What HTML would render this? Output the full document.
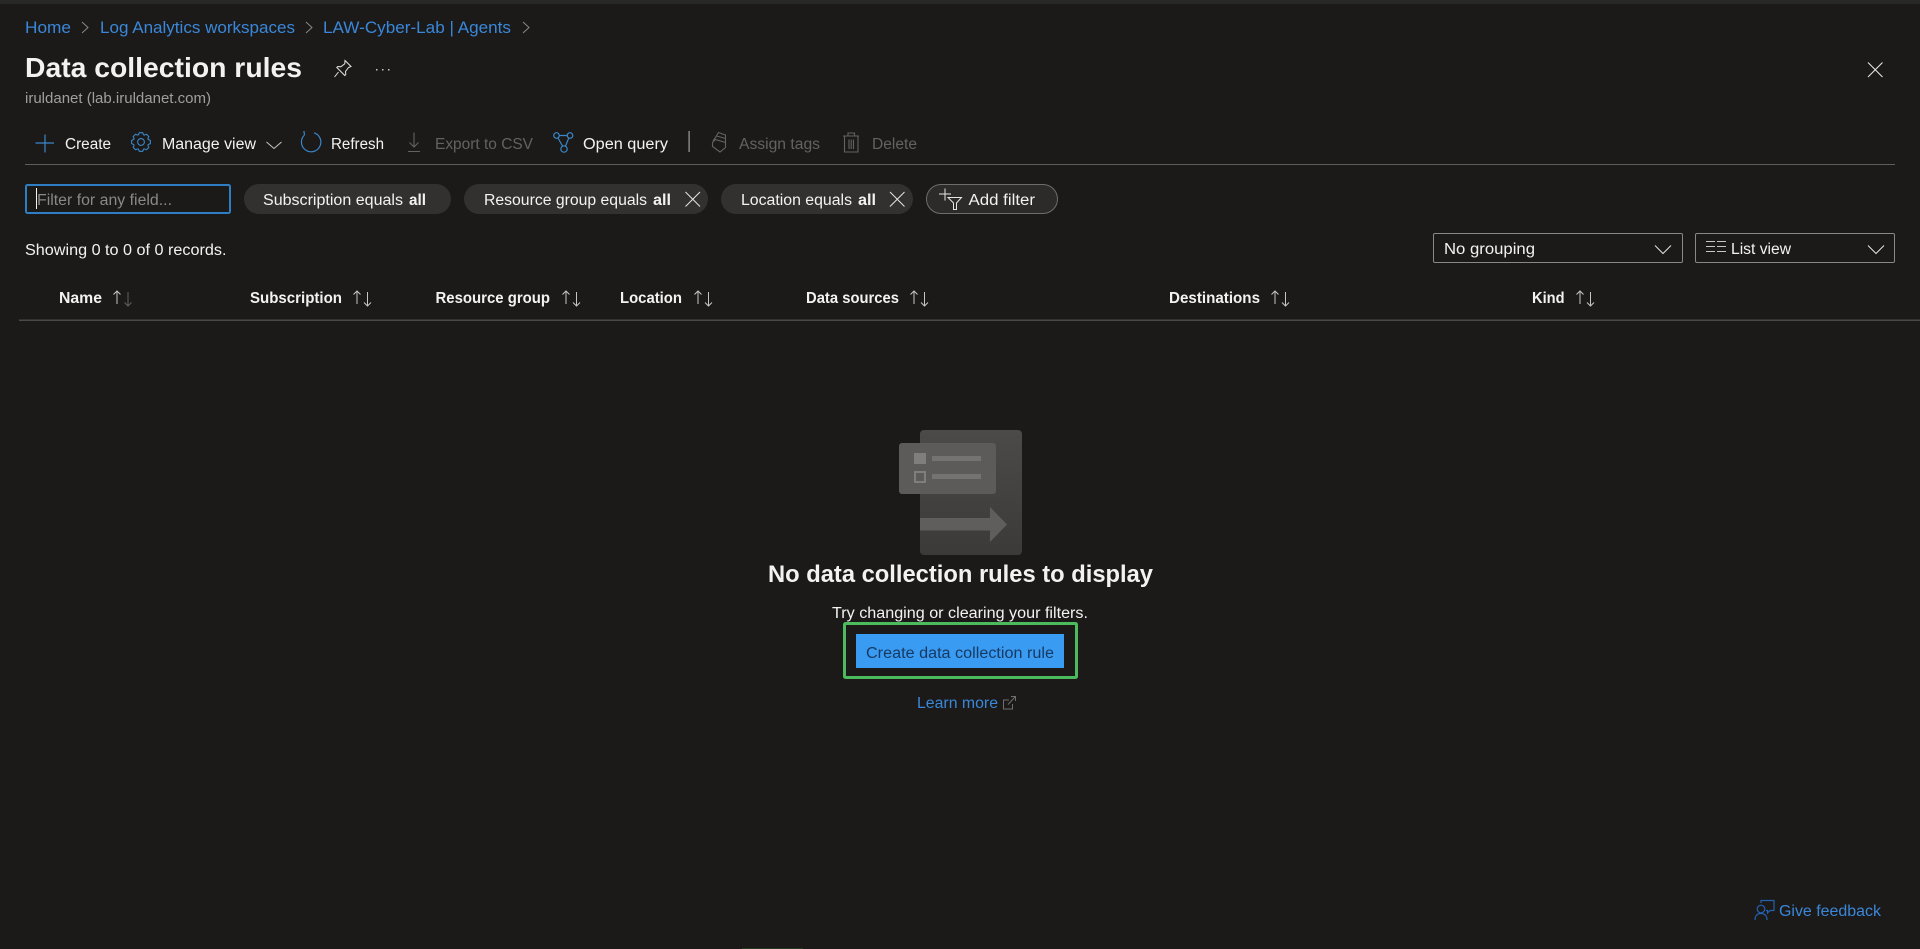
<!DOCTYPE html>
<html lang="en">
<head>
<meta charset="utf-8">
<title>Data collection rules</title>
<style>
html,body{margin:0;padding:0;background:#1b1a19;width:1920px;height:949px;overflow:hidden}
svg{display:block}
text{font-family:"Liberation Sans",Arial,sans-serif;fill:#f3f2f1;font-size:15.5px}
.l{fill:#3a87d9;font-size:17px}
.d{fill:#636261}
.b{font-weight:bold}
.i{fill:none;stroke:#e6e5e3;stroke-width:1}
.s{fill:none;stroke:#c8c6c4;stroke-width:1}
.ib{fill:none;stroke:#3a87c9;stroke-width:1.2}
.id{fill:none;stroke:#636261;stroke-width:1.1}
</style>
</head>
<body>
<svg width="1920" height="949" viewBox="0 0 1920 949" xmlns="http://www.w3.org/2000/svg">
<defs>
<polyline id="tooth" points="-2.79,-6.74 -1.65,-9.36 1.65,-9.36 2.79,-6.74" fill="none" stroke="#3a87c9" stroke-width="1.1"/>
<linearGradient id="doc" x1="0" y1="0" x2="0" y2="1"><stop offset="0" stop-color="#4b4a49"/><stop offset="1" stop-color="#3b3a39"/></linearGradient>
</defs>
<rect width="1920" height="949" fill="#1b1a19"/>
<rect width="1920" height="4" fill="#282827"/>

<!-- breadcrumb -->
<text class="l" x="25" y="33" textLength="46" lengthAdjust="spacingAndGlyphs">Home</text>
<path class="i" style="stroke:#8a8886" d="M82 22l6 5.500-6 5.500"/>
<text class="l" x="100" y="33" textLength="195" lengthAdjust="spacingAndGlyphs">Log Analytics workspaces</text>
<path class="i" style="stroke:#8a8886" d="M306 22l6 5.500-6 5.500"/>
<text class="l" x="323" y="33" textLength="188" lengthAdjust="spacingAndGlyphs">LAW-Cyber-Lab | Agents</text>
<path class="i" style="stroke:#8a8886" d="M523 22l6 5.500-6 5.500"/>

<!-- title -->
<text class="b" style="font-size:27.500px" x="25" y="77" textLength="277" lengthAdjust="spacingAndGlyphs">Data collection rules</text>
<g class="i">
<path d="M345 60.500l6 6-2.500 1-3 4 .3 3-1 1-8-8 1-1 3 .3 4-3z"/>
<path d="M338.500 72l-4 5"/>
</g>
<g fill="#c8c6c4"><rect x="376" y="69" width="1.500" height="1.500"/><rect x="382" y="69" width="1.500" height="1.500"/><rect x="388" y="69" width="1.500" height="1.500"/></g>
<text style="font-size:15px;fill:#a19f9d" x="25" y="103" textLength="186" lengthAdjust="spacingAndGlyphs">iruldanet (lab.iruldanet.com)</text>

<!-- close -->
<path class="i" style="stroke-width:1.100" d="M1868 62.500l14.500 14.500M1882.500 62.500L1868 77"/>

<!-- toolbar -->
<path class="ib" d="M45 134.500v18M35.500 143h18.500"/>
<text x="65" y="149" textLength="46" lengthAdjust="spacingAndGlyphs">Create</text>
<g transform="translate(141 142)">
<use href="#tooth"/><use href="#tooth" transform="rotate(45)"/><use href="#tooth" transform="rotate(90)"/><use href="#tooth" transform="rotate(135)"/><use href="#tooth" transform="rotate(180)"/><use href="#tooth" transform="rotate(225)"/><use href="#tooth" transform="rotate(270)"/><use href="#tooth" transform="rotate(315)"/>
<circle r="3.400" fill="none" stroke="#3a87c9" stroke-width="1.100"/>
</g>
<text x="162" y="149" textLength="94" lengthAdjust="spacingAndGlyphs">Manage view</text>
<path class="s" d="M266.500 142l7.500 6.500 7.500-6.500"/>
<path class="ib" d="M304.500 135a9.700 9.700 0 1 0 9.500-2.200M304.500 135l-.6-4"/>
<text x="331" y="149" textLength="53" lengthAdjust="spacingAndGlyphs">Refresh</text>
<path class="id" d="M414 132.500v14M409.500 142.500l4.500 4.500 4.500-4.500M408 151.500h12"/>
<text class="d" x="435" y="149" textLength="98" lengthAdjust="spacingAndGlyphs">Export to CSV</text>
<g class="ib"><circle cx="556.500" cy="135.500" r="2.800"/><circle cx="570" cy="135.500" r="2.800"/><circle cx="564" cy="149" r="3.200"/><path d="M559.300 135.500h7.900M558 138l4.500 8M568.800 138l-3.300 8"/></g>
<text x="583" y="149" textLength="85" lengthAdjust="spacingAndGlyphs">Open query</text>
<rect x="688.500" y="131" width="1.200" height="21" fill="#a19f9d"/>
<g class="id"><path d="M712.500 142.500l3-3 10 3v5l-5.500 4.500-7.500-5.500z"/><path d="M713 141l3.500-5 9 2.500v4M716 136.500l2.500-4 7 2.500v4"/></g>
<text class="d" x="739" y="149" textLength="81" lengthAdjust="spacingAndGlyphs">Assign tags</text>
<g class="id"><path d="M844.500 136.500v15.500h13.500v-15.500M843 136h16M848 136v-3h6.500v3M849 139.500v9.500M851.200 139.500v9.500M853.500 139.500v9.500"/></g>
<text class="d" x="872" y="149" textLength="45" lengthAdjust="spacingAndGlyphs">Delete</text>
<rect x="25" y="164" width="1870" height="1" fill="#5e5d5c"/>

<!-- filter row -->
<rect x="26" y="185" width="204" height="28" rx="1.500" fill="#1b1a19" stroke="#2d7ec4" stroke-width="2"/>
<rect x="36" y="188" width="1" height="21" fill="#f3f2f1"/>
<text style="fill:#8a8886" x="37" y="205" textLength="135" lengthAdjust="spacingAndGlyphs">Filter for any field...</text>

<rect x="244" y="184" width="207" height="30" rx="15" fill="#323130"/>
<text x="263" y="205" textLength="140" lengthAdjust="spacingAndGlyphs">Subscription equals</text>
<text class="b" x="409" y="205" textLength="17" lengthAdjust="spacingAndGlyphs">all</text>

<rect x="464" y="184" width="244" height="30" rx="15" fill="#323130"/>
<text x="484" y="205" textLength="163" lengthAdjust="spacingAndGlyphs">Resource group equals</text>
<text class="b" x="653" y="205" textLength="18" lengthAdjust="spacingAndGlyphs">all</text>
<path class="i" d="M685.500 192l14.500 14.500M700 192l-14.500 14.500"/>

<rect x="721" y="184" width="192" height="30" rx="15" fill="#323130"/>
<text x="741" y="205" textLength="111" lengthAdjust="spacingAndGlyphs">Location equals</text>
<text class="b" x="858" y="205" textLength="18" lengthAdjust="spacingAndGlyphs">all</text>
<path class="i" d="M890 192l14.500 14.500M904.500 192l-14.500 14.500"/>

<rect x="926.500" y="184.500" width="131" height="29" rx="14.500" fill="#2c2b2a" stroke="#6e6d6b"/>
<path class="i" d="M939 194h12M945 188.500v12M948 197.500h13.500l-5 5.500v6.500h-3V203z"/>
<text x="968.500" y="205" textLength="66.500" lengthAdjust="spacingAndGlyphs">Add filter</text>

<!-- records + dropdowns -->
<text x="25" y="255" textLength="201.500" lengthAdjust="spacingAndGlyphs">Showing 0 to 0 of 0 records.</text>
<rect x="1433.500" y="233.500" width="249" height="29" rx="1.500" fill="none" stroke="#8a8886"/>
<text x="1444" y="254" textLength="91" lengthAdjust="spacingAndGlyphs">No grouping</text>
<path class="i" d="M1655 245.500l8 8 8-8"/>
<rect x="1695.500" y="233.500" width="199" height="29" rx="1.500" fill="none" stroke="#8a8886"/>
<path class="s" d="M1706 241.500h9M1706 246.500h9M1706 251.500h9M1717 241.500h9M1717 246.500h9M1717 251.500h9"/>
<text x="1731" y="254" textLength="60" lengthAdjust="spacingAndGlyphs">List view</text>
<path class="i" d="M1868 245.500l8 8 8-8"/>

<!-- table header -->
<text class="b" x="59" y="303" textLength="43" lengthAdjust="spacingAndGlyphs">Name</text>
<path class="s" d="M117 304v-13M113.500 294.500l3.500-3.500 3.500 3.500"/><path class="s" style="stroke:#605f5e" d="M128 292v14M124.500 302.500l3.500 3.500 3.500-3.500"/>
<text class="b" x="250" y="303" textLength="92" lengthAdjust="spacingAndGlyphs">Subscription</text>
<path class="s" d="M357 304v-13M353.500 294.500l3.500-3.500 3.500 3.500M367.500 292v14M364 302.500l3.500 3.500 3.500-3.500"/>
<text class="b" x="435.500" y="303" textLength="114.500" lengthAdjust="spacingAndGlyphs">Resource group</text>
<path class="s" d="M566 304v-13M562.500 294.500l3.500-3.500 3.500 3.500M576.500 292v14M573 302.500l3.500 3.500 3.500-3.500"/>
<text class="b" x="620" y="303" textLength="62" lengthAdjust="spacingAndGlyphs">Location</text>
<path class="s" d="M698 304v-13M694.500 294.500l3.500-3.500 3.500 3.500M708.500 292v14M705 302.500l3.500 3.500 3.500-3.500"/>
<text class="b" x="806" y="303" textLength="93" lengthAdjust="spacingAndGlyphs">Data sources</text>
<path class="s" d="M914 304v-13M910.500 294.500l3.500-3.500 3.500 3.500M924.500 292v14M921 302.500l3.500 3.500 3.500-3.500"/>
<text class="b" x="1169" y="303" textLength="91" lengthAdjust="spacingAndGlyphs">Destinations</text>
<path class="s" d="M1275 304v-13M1271.500 294.500l3.500-3.500 3.500 3.500M1285.500 292v14M1282 302.500l3.500 3.500 3.500-3.500"/>
<text class="b" x="1532" y="303" textLength="32.500" lengthAdjust="spacingAndGlyphs">Kind</text>
<path class="s" d="M1580 304v-13M1576.500 294.500l3.500-3.500 3.500 3.500M1590.500 292v14M1587 302.500l3.500 3.500 3.500-3.500"/>
<rect x="19" y="319.500" width="1901" height="1.500" fill="#4a4948"/>

<!-- empty state illustration -->
<rect x="920" y="430" width="102" height="125" rx="4" fill="url(#doc)"/>
<rect x="899" y="443" width="97" height="51" rx="3" fill="#5c5b5a"/>
<rect x="914" y="453" width="12" height="11" fill="#7f7e7d"/>
<rect x="915" y="472" width="10" height="10" fill="none" stroke="#7f7e7d" stroke-width="2"/>
<rect x="932" y="456" width="49" height="5" fill="#747372"/>
<rect x="932" y="474" width="49" height="5" fill="#747372"/>
<path d="M920 518h70v-11l17 17.500-17 17.500v-11.500h-70z" fill="#5f5e5d"/>

<text class="b" style="font-size:24.500px" x="768" y="582" textLength="385" lengthAdjust="spacingAndGlyphs">No data collection rules to display</text>
<text x="832" y="618" textLength="256" lengthAdjust="spacingAndGlyphs">Try changing or clearing your filters.</text>

<rect x="844.500" y="623.500" width="232" height="54" rx="1" fill="none" stroke="#4cbb5e" stroke-width="3"/>
<rect x="856" y="634" width="208" height="34" fill="#3a9bf2"/>
<text style="fill:#173a63" x="866" y="658" textLength="188" lengthAdjust="spacingAndGlyphs">Create data collection rule</text>

<text style="fill:#3a87d9" x="917" y="708" textLength="81" lengthAdjust="spacingAndGlyphs">Learn more</text>
<path fill="none" stroke="#6f6e6c" stroke-width="1" d="M1009 700h-5.500v9h9v-5M1008 704.500l7-7.500M1011 696.500h4.500v4.500"/>

<!-- feedback -->
<g fill="none" stroke="#2462ae" stroke-width="1.200">
<circle cx="1761" cy="909" r="3.800"/>
<path d="M1755 920c0-4.500 2.500-6.500 6-6.500s6 2 6 6.500"/>
<path d="M1761 903v-2.500h13v10h-4l-2.500 2.500v-2.500h-1.500"/>
</g>
<text style="fill:#3a87d9" x="1779" y="916" textLength="102" lengthAdjust="spacingAndGlyphs">Give feedback</text>

<rect x="742" y="948" width="61" height="1" fill="#203a20"/>
</svg>
</body>
</html>
